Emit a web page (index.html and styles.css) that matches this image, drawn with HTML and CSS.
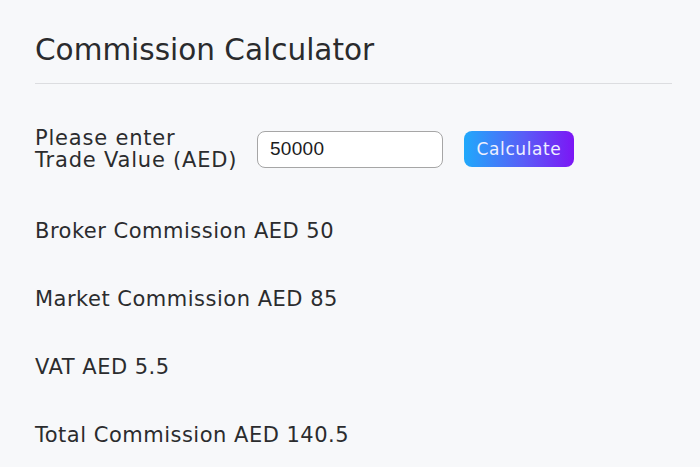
FILE: index.html
```html
<!DOCTYPE html>
<html lang="en">
<head>
<meta charset="utf-8">
<title>Commission Calculator</title>
<link rel="stylesheet" href="styles.css">
</head>
<body>
<main class="page">
  <h1 class="title">Commission Calculator</h1>
  <div class="divider"></div>
  <form class="calc-row" onsubmit="return false">
    <label class="calc-label" for="trade">Please enter<br>Trade Value (AED)</label>
    <input class="calc-input" id="trade" type="text" value="50000">
    <button class="calc-button" type="button">Calculate</button>
  </form>
  <div class="results">
    <p class="result">Broker Commission AED 50</p>
    <p class="result">Market Commission AED 85</p>
    <p class="result">VAT AED 5.5</p>
    <p class="result">Total Commission AED 140.5</p>
  </div>
</main>
</body>
</html>
```
FILE: styles.css
```css
html, body {
  margin: 0;
  padding: 0;
  background: #f7f8fa;
}
body {
  font-family: "DejaVu Sans", Inter, sans-serif;
  color: #2b2c2e;
}
.page {
  padding: 28px 28px 0 35px;
}
.title {
  margin: 0;
  font-size: 29.5px;
  font-weight: 400;
  line-height: 44px;
  padding-bottom: 11px;
  color: #2a2b2d;
}
.divider {
  border-top: 1px solid #dcdde0;
}
.calc-row {
  display: flex;
  align-items: center;
  margin: 43px 0 0 0;
}
.calc-label {
  width: 222px;
  flex: none;
  font-size: 21px;
  line-height: 22px;
  letter-spacing: 0.8px;
  color: #2b2c2e;
}
.calc-input {
  box-sizing: border-box;
  width: 186px;
  height: 37px;
  border: 1px solid #a6a6a6;
  border-radius: 8px;
  background: #ffffff;
  padding: 0 12px;
  font-family: "Liberation Sans", Arial, sans-serif;
  font-size: 19px;
  letter-spacing: 0.3px;
  color: #1c1c1c;
  margin: 0;
}
.calc-button {
  box-sizing: border-box;
  width: 110px;
  height: 36px;
  margin-left: 21px;
  border: none;
  border-radius: 8px;
  background: linear-gradient(90deg, #20a9fb 0%, #5a5cf7 55%, #7c16f5 100%);
  color: #eef0ff;
  font-family: "DejaVu Sans", Inter, sans-serif;
  font-size: 17px;
  letter-spacing: 0.6px;
  padding: 0;
}
.results {
  display: flex;
  flex-direction: column;
  gap: 40px;
  margin-top: 46px;
}
.result {
  margin: 0;
  font-size: 21px;
  line-height: 28px;
  letter-spacing: 0.5px;
  color: #2b2c2e;
}
```
